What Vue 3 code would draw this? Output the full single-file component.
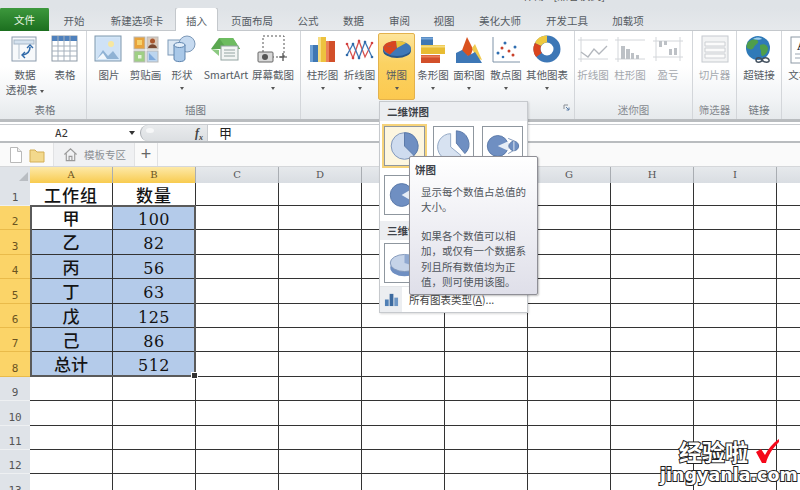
<template>
  <div class="app">
    <div class="titlebar"><span class="title-text">工作簿1 [兼容模式]</span></div>

    <div class="tabs">
      <div
        v-for="t in tabs"
        :key="t.name"
        class="tab"
        :class="t.cls"
        :style="{ width: t.w + 'px' }"
      >{{ t.name }}</div>
    </div>

    <div class="ribbon">
      <div
        v-for="(g, gi) in groups"
        :key="gi"
        class="group"
        :style="{ width: g.w + 'px', paddingLeft: g.pad + 'px' }"
      >
        <div class="group-items">
          <div
            v-for="it in g.items"
            :key="it.icon"
            class="rb-item"
            :class="{ active: it.active, muted: g.muted }"
            :style="{ width: it.w + 'px' }"
          >
            <svg class="rb-icon" viewBox="0 0 32 30" v-html="icons[it.icon]"></svg>
            <div class="rb-label">{{ it.label }}</div>
            <div v-if="it.label2" class="rb-label">{{ it.label2 }}<span class="inline-caret"></span></div>
            <div v-if="it.caret" class="caret"></div>
          </div>
        </div>
        <div class="group-name" :class="{ muted: g.muted }">{{ g.name }}</div>
        <svg v-if="g.launcher" class="launcher" viewBox="0 0 8 8">
          <path d="M1 1h4M1 1v4" stroke="#8a8f96" fill="none" />
          <path d="M3 3l3 3M6 3.5V6H3.5" stroke="#5d7fa8" fill="none" />
        </svg>
      </div>
    </div>

    <div class="formula">
      <div class="namebox">
        <span class="cellname">A2</span>
        <span class="name-caret"></span>
      </div>
      <div class="fx-wrap">
        <span class="oval"></span>
        <span class="fx">f<sub>x</sub></span>
      </div>
      <div class="input">甲</div>
    </div>

    <div class="docbar">
      <svg class="doc-ico" viewBox="0 0 16 18">
        <path d="M2.5 1.5h7l4 4v11h-11z" fill="#fff" stroke="#b9b9b9" />
        <path d="M9.5 1.5v4h4" fill="#eee" stroke="#b9b9b9" />
      </svg>
      <svg class="doc-ico folder" viewBox="0 0 16 18">
        <path d="M1 4h5l2 2h7v10H1z" fill="#f3d98c" stroke="#d3ae55" />
      </svg>
      <div class="doc-tab">
        <svg class="home" viewBox="0 0 16 16">
          <path d="M1.5 8 8 2l6.5 6M3.5 7v7.5h9V7M6.5 14.5V10h3v4.500" fill="none" stroke="#9a9a9a" stroke-width="1.200" />
        </svg>
        <span>模板专区</span>
      </div>
      <div class="doc-plus">+</div>
    </div>

    <div class="sheet">
      <div class="corner"><span class="corner-tri"></span></div>
      <div
        v-for="c in cols"
        :key="c"
        class="col-head"
        :class="{ hl: c === 'A' || c === 'B' }"
      >{{ c }}</div>

      <template v-for="r in rows" :key="r.n">
        <div class="row-head" :class="{ hl: r.n >= 2 && r.n <= 8 }">{{ r.n }}</div>
        <div
          v-for="(c, i) in cols"
          :key="c"
          class="cell"
          :class="{ sel: isSelected(r.n, i), num: i === 1 && r.n > 1, first: r.n === 1 }"
        >{{ i === 0 ? r.a : i === 1 ? r.b : '' }}</div>
      </template>

      <div class="selection"><span class="handle"></span></div>
    </div>

    <div class="gallery">
      <div class="gal-head">二维饼图</div>
      <div class="gal-row">
        <div class="tile selected"><svg viewBox="0 0 40 40" v-html="icons.pie2d"></svg></div>
        <div class="tile"><svg viewBox="0 0 40 40" v-html="icons.pieOut"></svg></div>
        <div class="tile"><svg viewBox="0 0 40 40" v-html="icons.pieOfPie"></svg></div>
      </div>
      <div class="gal-row">
        <div class="tile"><svg viewBox="0 0 40 40" v-html="icons.pieBar"></svg></div>
      </div>
      <div class="gal-head second">三维饼图</div>
      <div class="gal-row solo">
        <div class="tile"><svg viewBox="0 0 40 40" v-html="icons.pie3d"></svg></div>
      </div>
      <div class="gal-foot">
        <div class="foot-ico">
          <svg viewBox="0 0 16 16">
            <rect x="1" y="8" width="4" height="7" fill="#4f7fb5" />
            <rect x="6" y="2" width="4" height="13" fill="#3c6a9f" />
            <rect x="11" y="6" width="4" height="9" fill="#6f97c5" />
          </svg>
        </div>
        <span class="foot-text">所有图表类型(<u>A</u>)...</span>
      </div>
    </div>

    <div class="tooltip">
      <div class="tip-title">饼图</div>
      <p>显示每个数值占总值的大小。</p>
      <p>如果各个数值可以相加，或仅有一个数据系列且所有数值均为正值，则可使用该图。</p>
    </div>

    <div class="watermark">
      <div class="wm-cn">经验啦</div>
      <div class="wm-en">jingyanla.com</div>
      <svg class="wm-check" viewBox="0 0 24 26">
        <path d="M1 14l5-3 4 6C13 11 18 5 24 1v3C18 10 13 17 11 25H7z" fill="#f5081a" />
      </svg>
    </div>
  </div>
</template>

<script setup>
const tabs = [
  { name: '文件', w: 49, cls: 'file' },
  { name: '开始', w: 50 },
  { name: '新建选项卡', w: 76 },
  { name: '插入', w: 43, cls: 'current' },
  { name: '页面布局', w: 68 },
  { name: '公式', w: 44 },
  { name: '数据', w: 47 },
  { name: '审阅', w: 45 },
  { name: '视图', w: 44 },
  { name: '美化大师', w: 68 },
  { name: '开发工具', w: 66 },
  { name: '加载项', w: 56 }
]

const groups = [
  {
    name: '表格', w: 87, pad: 4,
    items: [
      { icon: 'pivot', label: '数据', label2: '透视表', w: 42 },
      { icon: 'table', label: '表格', w: 38 }
    ]
  },
  {
    name: '插图', w: 214, pad: 4,
    items: [
      { icon: 'picture', label: '图片', w: 36 },
      { icon: 'clip', label: '剪贴画', w: 37 },
      { icon: 'shape', label: '形状', w: 36, caret: true },
      { icon: 'smart', label: 'SmartArt', w: 52 },
      { icon: 'shot', label: '屏幕截图', w: 42, caret: true }
    ]
  },
  {
    name: '图表', w: 274, pad: 3, launcher: true,
    items: [
      { icon: 'column', label: '柱形图', w: 37, caret: true },
      { icon: 'line', label: '折线图', w: 37, caret: true },
      { icon: 'pie', label: '饼图', w: 37, caret: true, active: true },
      { icon: 'bar', label: '条形图', w: 36, caret: true },
      { icon: 'area', label: '面积图', w: 36, caret: true },
      { icon: 'scatter', label: '散点图', w: 38, caret: true },
      { icon: 'donut', label: '其他图表', w: 44, caret: true }
    ]
  },
  {
    name: '迷你图', w: 118, pad: 0, muted: true,
    items: [
      { icon: 'spLine', label: '折线图', w: 36 },
      { icon: 'spCol', label: '柱形图', w: 38 },
      { icon: 'spWin', label: '盈亏', w: 38 }
    ]
  },
  {
    name: '筛选器', w: 44, pad: 0, muted: true,
    items: [{ icon: 'slicer', label: '切片器', w: 43 }]
  },
  {
    name: '链接', w: 45, pad: 0,
    items: [{ icon: 'link', label: '超链接', w: 44 }]
  },
  {
    name: '', w: 46, pad: 0,
    items: [{ icon: 'text', label: '文本框', w: 44 }]
  }
]

const cols = ['A', 'B', 'C', 'D', 'E', 'F', 'G', 'H', 'I', 'J']

const rows = [
  { n: 1, a: '工作组', b: '数量' },
  { n: 2, a: '甲', b: '100' },
  { n: 3, a: '乙', b: '82' },
  { n: 4, a: '丙', b: '56' },
  { n: 5, a: '丁', b: '63' },
  { n: 6, a: '戊', b: '125' },
  { n: 7, a: '己', b: '86' },
  { n: 8, a: '总计', b: '512' },
  { n: 9 }, { n: 10 }, { n: 11 }, { n: 12 }, { n: 13 }
]

// A2 是活动单元格，保持白色
const isSelected = (n, i) => i < 2 && n >= 2 && n <= 8 && !(n === 2 && i === 0)

const icons = {
  pivot: `<rect x="3" y="2" width="24" height="24" fill="#f7f9fb" stroke="#8b9bad"/><rect x="5" y="5" width="20" height="4" fill="#d5e2ef" stroke="#a8b8c8"/><path d="M10 9v15" stroke="#b5c2cf"/><path d="M21 12c0 5-3 7-7 8" fill="none" stroke="#2f69a8" stroke-width="1.600"/><path d="M18 13l3-3 3 3M16 17l-3 3 3 3" fill="none" stroke="#2f69a8" stroke-width="1.400"/>`,
  table: `<rect x="3" y="1" width="25" height="25" fill="#fff" stroke="#8d99a6"/><rect x="3" y="1" width="25" height="5" fill="#4f81bd"/><path d="M3 11h25M3 16h25M3 21h25M9 1v25M15 1v25M21 1v25" stroke="#a5b0bc"/>`,
  picture: `<rect x="2" y="1" width="26" height="25" fill="#d3e6f7" stroke="#7f97ad"/><rect x="4" y="3" width="22" height="21" fill="#cfe2f6"/><circle cx="18" cy="9" r="3" fill="#f7e7a0"/><path d="M4 24l6-9 5 6 5-5 6 8z" fill="#8fb2d4"/><path d="M4 24l6-6 4 6z" fill="#f2f7fc"/>`,
  clip: `<rect x="4" y="2" width="11" height="12" fill="#e8a33c" stroke="#b9b9b9"/><rect x="7" y="5" width="5" height="5" fill="#f6d16c"/><rect x="17" y="2" width="11" height="12" fill="#d9c9ba" stroke="#b9b9b9"/><circle cx="22.500" cy="6" r="2.500" fill="#a9562d"/><path d="M18 13c1-5 8-5 9 0z" fill="#7a4a32"/><rect x="4" y="16" width="11" height="11" fill="#9fcf85" stroke="#b9b9b9"/><rect x="8" y="20" width="3.500" height="3.500" fill="#e8f4de"/><rect x="17" y="16" width="11" height="11" fill="#bcd5ef" stroke="#b9b9b9"/><path d="M19 18l7 7h-7z" fill="#7ea9dc"/>`,
  shape: `<rect x="2" y="5" width="15" height="15" fill="#dce8f4" stroke="#7d99b8"/><circle cx="21" cy="9" r="8" fill="#c6daf0" stroke="#7d99b8"/><path d="M8 10v14c0 3.500 11 3.500 11 0V10z" fill="#a9c8e8" stroke="#5d83ad"/><ellipse cx="13.500" cy="10" rx="5.500" ry="2.500" fill="#e2eefa" stroke="#5d83ad"/>`,
  smart: `<path d="M1 14 9 3h14l7 11-7 0H9z" fill="#5aa750"/><path d="M1 14l8 7V15z" fill="#8cc981"/><path d="M9 3h14l7 11H17z" fill="#6dbc60"/><rect x="11" y="11" width="17" height="14" fill="#f2f5f4" stroke="#93a4a2"/><path d="M14 15h11M14 18h11M14 21h11" stroke="#93a4a2"/>`,
  shot: `<rect x="6" y="1" width="21" height="21" fill="none" stroke="#555" stroke-dasharray="2 2"/><rect x="1" y="17" width="15" height="10" rx="1" fill="#d8d8d8" stroke="#666"/><circle cx="8" cy="22" r="3" fill="#555"/><path d="M22 22h8M26 18v8" stroke="#444" stroke-width="1.200"/>`,
  column: `<rect x="3" y="10" width="8" height="17" fill="#3f77b3"/><rect x="3" y="10" width="3" height="17" fill="#6fa2d6"/><rect x="11" y="2" width="8" height="25" fill="#edc23f"/><rect x="11" y="2" width="3" height="25" fill="#f7de82"/><rect x="19" y="6" width="9" height="21" fill="#d24f2a"/><rect x="19" y="6" width="3" height="21" fill="#ea7f5a"/>`,
  line: `<path d="M3 9l6 14 6-17 6 16 7-14" fill="none" stroke="#d9534f" stroke-width="1.300"/><path d="M3 20 9 9l6 14 6-16 7 15" fill="none" stroke="#3d77b6" stroke-width="1.300"/><g fill="#2f69a8"><circle cx="3" cy="20" r="1.300"/><circle cx="9" cy="9" r="1.300"/><circle cx="15" cy="23" r="1.300"/><circle cx="21" cy="7" r="1.300"/><circle cx="28" cy="22" r="1.300"/></g><g fill="#d24040"><circle cx="3" cy="9" r="1.300"/><circle cx="15" cy="6" r="1.300"/><circle cx="9" cy="23" r="1.300"/><circle cx="28" cy="8" r="1.300"/></g>`,
  pie: `<ellipse cx="16" cy="15.500" rx="14" ry="7.500" fill="#2a5789"/><ellipse cx="16" cy="13.500" rx="14" ry="7.500" fill="#3f78b8"/><path d="M16 13 3 10.500C5 7.500 10 6 15 6z" fill="#d9451f"/><path d="M2.300 12C2 15 5 18 9 19.500l7-6.500L3 10.500z" fill="#d9451f"/><path d="M16 13 15 6c4 0 8 .5 10 2z" fill="#e9c33a"/>`,
  bar: `<path d="M4 2h12v8H4z" fill="#3f77b3"/><path d="M4 3.500h12" stroke="#76a6d8" stroke-width="2"/><path d="M4 10h24v9H4z" fill="#e8bc33"/><path d="M4 11.500h24" stroke="#f6dc80" stroke-width="2"/><path d="M4 20h19v8H4z" fill="#d24f2a"/><path d="M4 21.500h19" stroke="#ea7f5a" stroke-width="2"/>`,
  area: `<path d="M8 18 14 2l6 12-3 8z" fill="#d9521f"/><path d="M19 13l3-4 7 16-6-2z" fill="#efca4f"/><path d="M3 28V18l6-3 6 6 7-4 7 11z" fill="#3d77b6"/>`,
  scatter: `<path d="M3 2v25h27" fill="none" stroke="#7f93a8"/><g fill="#c9402a"><circle cx="12" cy="13" r="1.500"/><circle cx="19" cy="16" r="1.500"/><circle cx="23" cy="20" r="1.500"/></g><g fill="#2f6eb0"><circle cx="8" cy="18" r="1.500"/><circle cx="15" cy="8" r="1.500"/><circle cx="25" cy="12" r="1.500"/><circle cx="13" cy="22" r="1.300"/></g>`,
  donut: `<circle cx="16" cy="14" r="10" fill="none" stroke="#3d77b6" stroke-width="7"/><path d="M7 9.500A10 10 0 0 1 16 4" fill="none" stroke="#efc93f" stroke-width="7"/><path d="M8 20A10 10 0 0 1 7 9.500" fill="none" stroke="#d9451f" stroke-width="7"/>`,
  spLine: `<path d="M1 5h30M1 24h30M4 2v25" stroke="#d3d6da"/><path d="M4 17l7 5 6-8 5 5 8-8" fill="none" stroke="#b3b7bd" stroke-width="1.300"/>`,
  spCol: `<path d="M1 5h30M1 24h30M4 2v25" stroke="#d3d6da"/><path d="M7 11h4v13H7zM12 14h4v10h-4zM17 18h3v6h-3zM22 20h3v4h-3z" fill="#bdc1c6"/>`,
  spWin: `<path d="M1 6h30M1 22h30M4 2v24M28 2v24" stroke="#d3d6da"/><path d="M7 6h3v6H7zM12 6h3v4h-3zM17 14h3v6h-3zM22 13h3v7h-3z" fill="#bdc1c6"/>`,
  slicer: `<rect x="3" y="1" width="26" height="26" fill="#f2f3f4" stroke="#c6cacf"/><path d="M6 7h20v4H6zM6 13h20v4H6zM6 19h20v4H6z" fill="#fbfbfb" stroke="#cdd0d4"/>`,
  link: `<circle cx="15" cy="13" r="12" fill="#2f7ab8"/><path d="M5 7c4-3 8-4 10-1 1 3-3 3-4 6s-4 3-7 1c-1-2 0-4 1-6zM17 10c4-2 7 0 8 3 0 4-3 8-6 8-2-3 0-5-2-7z" fill="#4f9e4b"/><path d="M10 4c3-2 7-2 9 0-2 1-6 1-9 0z" fill="#9fd0ef"/><path d="M13 25c0-3 5-3 6 0 1-3 6-3 7 0s-5 3-7 0c-1 3-6 3-6 0z" fill="none" stroke="#44515f" stroke-width="1.500"/>`,
  text: `<rect x="3" y="2" width="28" height="26" fill="#fff" stroke="#8e9aa6"/><text x="9" y="15" font-size="14" font-family="Liberation Serif" font-weight="700" fill="#333">A</text><path d="M7 19h18M7 23h18" stroke="#9aa6b2"/>`,
  pie2d: `<circle cx="20" cy="20" r="14" fill="#cfdcef" stroke="#7f96b8"/><path d="M20 20V6a14 14 0 0 1 10 24z" fill="#6f8fc2" stroke="#5a78a8"/>`,
  pieOut: `<path d="M17 21V7A14 14 0 1 0 28 30z" fill="#d7e2f1" stroke="#8ea4c2"/><path d="M23 17V4a14 14 0 0 1 9 24z" fill="#6f8fc2" stroke="#5a78a8"/>`,
  pieOfPie: `<path d="M26 12 33 15M26 28l7-4" stroke="#7f96b8"/><circle cx="15" cy="20" r="11" fill="#6f8fc2" stroke="#5a78a8"/><path d="M15 20l11-5v10z" fill="#e6edf6"/><circle cx="32" cy="20" r="5" fill="#6f8fc2" stroke="#5a78a8"/><path d="M32 15v10" stroke="#e6edf6"/>`,
  pieBar: `<circle cx="17" cy="20" r="12" fill="#6f8fc2" stroke="#5a78a8"/><path d="M17 20l12-7v14z" fill="#e6edf6"/>`,
  pie3d: `<ellipse cx="20" cy="25" rx="15" ry="9" fill="#6f8fc2"/><ellipse cx="20" cy="20" rx="15" ry="9" fill="#c5d3e8" stroke="#7f96b8"/><path d="M20 20V11a15 9 0 0 1 13 13z" fill="#8fa8d0"/>`
}
</script>

<style scoped>
.app {
  position: relative;
  width: 800px;
  height: 490px;
  overflow: hidden;
  background: #fff;
  font-family: "Noto Sans CJK SC", "Liberation Sans", sans-serif;
  color: #555b63;
  font-size: 10.5px;
}

.titlebar {
  height: 8px;
  background: #dfe3e7;
  position: relative;
  overflow: hidden;
}
.title-text {
  position: absolute;
  left: 512px;
  top: -13px;
  font-size: 11px;
  line-height: 16px;
  color: #555;
}

.tabs {
  display: flex;
  height: 23px;
  background: linear-gradient(#dfe3e7, #e6e9ec);
  border-bottom: 1px solid #c4c8cc;
  box-sizing: border-box;
}
.tab {
  text-align: center;
  line-height: 25px;
  height: 23px;
  color: #555b63;
  flex: none;
}
.tab.file {
  background: linear-gradient(#3e9a3e, #1c6f1f);
  color: #eaf5e4;
  border-radius: 3px 3px 0 0;
  margin-top: -1px;
  height: 24px;
}
.tab.current {
  background: #fff;
  border: 1px solid #c4c8cc;
  border-bottom: none;
  border-radius: 3px 3px 0 0;
  box-sizing: border-box;
  margin-top: -1px;
  height: 24px;
}

.ribbon {
  display: flex;
  height: 88px;
  background: linear-gradient(#fff 40%, #f2f4f6 75%, #e6e9ec);
  border-bottom: 3px solid #b9bcbf;
  overflow: hidden;
}
.group {
  position: relative;
  flex: none;
  box-sizing: border-box;
  border-right: 1px solid #d3d6da;
  display: flex;
  flex-direction: column;
}
.group-items {
  display: flex;
  height: 71px;
}
.group-name {
  height: 17px;
  text-align: center;
  line-height: 15px;
  color: #70767d;
}
.group-name.muted {
  color: #85898f;
}
.launcher {
  position: absolute;
  right: 3px;
  bottom: 7px;
  width: 8px;
  height: 8px;
}
.rb-item {
  flex: none;
  display: flex;
  flex-direction: column;
  align-items: center;
  padding-top: 4px;
  box-sizing: border-box;
  white-space: nowrap;
}
.rb-item.active {
  background: linear-gradient(#fde59c, #fbd262 45%, #fcc94f);
  border: 1px solid #e3b24d;
  border-radius: 2px;
  margin-top: 2px;
  padding-top: 1px;
  height: 67px;
}
.rb-item.muted {
  color: #a4a8ae;
}
.rb-icon {
  width: 32px;
  height: 30px;
  flex: none;
}
.rb-label {
  line-height: 15px;
  margin-top: 2px;
}
.rb-label + .rb-label {
  margin-top: 0;
}
.caret, .inline-caret {
  width: 0;
  height: 0;
  border-left: 2.500px solid transparent;
  border-right: 2.500px solid transparent;
  border-top: 3px solid #555;
}
.caret {
  margin-top: 5px;
}
.inline-caret {
  display: inline-block;
  margin-left: 3px;
  vertical-align: middle;
}

.formula {
  display: flex;
  height: 16px;
  margin-top: 2px;
  border-top: 1px solid #c9ccd0;
  border-bottom: 2px solid #b9bcbf;
  background: #fff;
}
.namebox {
  width: 140px;
  position: relative;
  display: flex;
  align-items: center;
  justify-content: flex-end;
  padding-right: 5px;
  box-sizing: border-box;
}
.cellname {
  position: absolute;
  left: 55px;
  font-family: "DejaVu Sans Mono", monospace;
  font-size: 11px;
  color: #333;
}
.name-caret {
  border-left: 3.500px solid transparent;
  border-right: 3.500px solid transparent;
  border-top: 4px solid #333;
}
.fx-wrap {
  width: 68px;
  background: linear-gradient(#e9ebed, #dcdfe2);
  border-left: 1px solid #a9adb2;
  border-radius: 9px 0 0 9px;
  display: flex;
  align-items: center;
  justify-content: flex-end;
  padding-right: 4px;
  box-sizing: border-box;
  position: relative;
  border-right: 1px solid #c9ccd0;
}
.oval {
  position: absolute;
  left: 5px;
  top: 3px;
  width: 8px;
  height: 5px;
  border-radius: 50%;
  background: #f6f7f8;
}
.fx {
  font-family: "Liberation Serif", serif;
  font-style: italic;
  font-weight: 700;
  font-size: 12px;
  line-height: 14px;
  color: #444;
}
.fx sub {
  font-size: 8px;
  line-height: 0;
}
.input {
  padding-left: 11px;
  font-size: 13px;
  line-height: 16px;
  color: #222;
}

.docbar {
  display: flex;
  align-items: stretch;
  height: 24px;
  background: #fafafa;
  padding-left: 8px;
  border-bottom: 1px solid #d5d7da;
  box-sizing: border-box;
}
.doc-ico {
  width: 16px;
  height: 18px;
  margin-top: 3px;
  margin-right: 5px;
}
.doc-ico.folder {
  margin-right: 8px;
}
.doc-tab {
  width: 82px;
  display: flex;
  align-items: center;
  gap: 6px;
  padding-left: 9px;
  box-sizing: border-box;
  background: #f0f1f3;
  border-left: 1px solid #e1e2e4;
  border-right: 1px solid #e1e2e4;
  color: #8b8f94;
}
.home {
  width: 15px;
  height: 15px;
}
.doc-plus {
  width: 22px;
  text-align: center;
  font-size: 18px;
  line-height: 22px;
  color: #666;
  font-family: "Liberation Sans", sans-serif;
  border-right: 1px solid #e1e2e4;
}

.sheet {
  position: relative;
  display: grid;
  grid-template-columns: 30px repeat(10, 83px);
  grid-template-rows: 16px 23px repeat(12, 24.4px);
}
.corner {
  background: #dfe3e8;
  position: relative;
}
.corner-tri {
  position: absolute;
  right: 2px;
  bottom: 2px;
  border-left: 9px solid transparent;
  border-bottom: 9px solid #b9bdc2;
}
.col-head {
  background: linear-gradient(#e6e9ec, #d9dde2);
  border-right: 1px solid #a9adb2;
  box-sizing: border-box;
  text-align: center;
  font-family: "DejaVu Serif", serif;
  font-size: 10px;
  line-height: 16px;
  color: #555;
}
.col-head.hl {
  background: linear-gradient(#fde9a8, #f8cb4f);
  color: #6a5320;
}
.row-head {
  background: #dfe3e8;
  text-align: center;
  font-family: "DejaVu Sans Mono", monospace;
  font-size: 11px;
  color: #555;
  display: flex;
  align-items: flex-end;
  justify-content: center;
  border-bottom: 1px solid #eef0f2;
  box-sizing: border-box;
  line-height: 15px;
}
.row-head.hl {
  background: #fbd468;
  border-bottom-color: #e9bb4a;
  color: #6a5320;
}
.cell {
  border-right: 1px solid #333;
  border-bottom: 1px solid #333;
  box-sizing: border-box;
  text-align: center;
  font-size: 17px;
  font-weight: 500;
  line-height: 24px;
  color: #141414;
}
.cell.first {
  letter-spacing: 1px;
  line-height: 24px;
}
.cell.sel {
  background: #b4cbea;
}
.cell.num {
  font-family: "DejaVu Serif", "Noto Sans CJK SC", serif;
  font-size: 16px;
  font-weight: 400;
  line-height: 27px;
  letter-spacing: .5px;
}
.selection {
  position: absolute;
  left: 30px;
  top: 38px;
  width: 166px;
  height: 172px;
  border: 2px solid #5a5a5a;
  box-sizing: border-box;
  pointer-events: none;
}
.handle {
  position: absolute;
  right: -4px;
  bottom: -4px;
  width: 5px;
  height: 5px;
  background: #333;
  border: 1px solid #fff;
}

.gallery {
  position: absolute;
  left: 379px;
  top: 101px;
  width: 149px;
  height: 212px;
  background: #fff;
  border: 1px solid #c6c9cd;
  box-sizing: border-box;
  box-shadow: 1px 1px 2px rgba(0, 0, 0, .15);
  display: flex;
  flex-direction: column;
}
.gal-head {
  height: 19px;
  line-height: 19px;
  padding-left: 7px;
  background: #eceef1;
  font-weight: 700;
  color: #3d4249;
}
.gal-head.second {
  margin-top: 6px;
}
.gal-row {
  display: flex;
  gap: 8px;
  padding: 5px 0 0 4px;
}
.gal-row + .gal-row {
  padding-top: 9px;
}
.gal-row.solo {
  padding-top: 3px;
}
.tile {
  width: 41px;
  height: 40px;
  border: 1px solid #8f979f;
  background: #fff;
  box-sizing: border-box;
  flex: none;
}
.tile svg {
  display: block;
  width: 100%;
  height: 100%;
}
.tile.selected {
  outline: 2px solid #f6d37a;
  background: #fdf6e0;
}
.gal-foot {
  margin-top: auto;
  height: 25px;
  border-top: 1px solid #e3e5e8;
  display: flex;
  align-items: center;
  color: #444;
}
.foot-ico {
  width: 22px;
  height: 100%;
  background: #eceef1;
  display: flex;
  align-items: center;
  justify-content: center;
  margin-right: 7px;
}
.foot-ico svg {
  width: 15px;
  height: 15px;
}
.foot-text {
  line-height: 14px;
}

.tooltip {
  position: absolute;
  left: 409px;
  top: 156px;
  width: 129px;
  height: 139px;
  box-sizing: border-box;
  padding: 5px 10px 0 5px;
  background: linear-gradient(#fff, #dfdfe9);
  border: 1px solid #8f8f96;
  border-radius: 2px;
  box-shadow: 1px 1px 2px rgba(0, 0, 0, .25);
  color: #50555c;
  line-height: 15.500px;
}
.tip-title {
  font-weight: 700;
  color: #3d4249;
  margin-bottom: 6px;
}
.tooltip p {
  margin: 0 0 13px 6px;
}

.watermark {
  position: absolute;
  left: 660px;
  top: 438px;
  width: 140px;
  height: 50px;
}
.wm-cn, .wm-en {
  position: absolute;
  color: #fff;
  -webkit-text-stroke: 2px #222;
  paint-order: stroke fill;
  font-weight: 700;
  white-space: nowrap;
}
.wm-cn {
  left: 19px;
  top: -1px;
  font-size: 23px;
  line-height: 28px;
  font-family: "Noto Sans CJK SC", sans-serif;
}
.wm-en {
  left: 0;
  top: 27px;
  font-size: 17.500px;
  line-height: 20px;
  font-family: "DejaVu Sans", sans-serif;
}
.wm-check {
  position: absolute;
  left: 95px;
  top: 0;
  width: 24px;
  height: 26px;
}
</style>

<style>
html, body {
  margin: 0;
  padding: 0;
  background: #fff;
}
</style>
